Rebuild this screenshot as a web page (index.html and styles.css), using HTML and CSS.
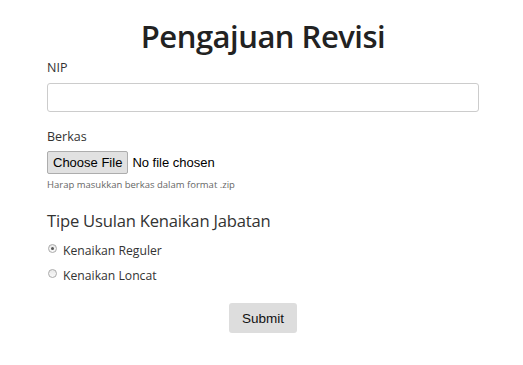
FILE: index.html
```html
<!DOCTYPE html>
<html>
<head>
<meta charset="utf-8">
<link rel="stylesheet" href="styles.css">
</head>
<body>
<div class="container">
  <h1 class="title">Pengajuan Revisi</h1>
  <form class="form">
    <div class="group">
      <label class="label">NIP</label>
      <input class="text-input" type="text">
    </div>
    <div class="group">
      <label class="label">Berkas</label>
      <div class="file-row">
        <button type="button" class="file-btn">Choose File</button>
        <span class="file-text">No file chosen</span>
      </div>
      <div class="help">Harap masukkan berkas dalam format .zip</div>
    </div>
    <h2 class="subtitle">Tipe Usulan Kenaikan Jabatan</h2>
    <div class="radio-list">
      <div class="radio-row"><span class="radio checked"></span><span class="radio-label">Kenaikan Reguler</span></div>
      <div class="radio-row"><span class="radio"></span><span class="radio-label">Kenaikan Loncat</span></div>
    </div>
    <div class="submit-row">
      <button type="button" class="submit">Submit</button>
    </div>
  </form>
</div>
</body>
</html>
```
FILE: styles.css
```css
* { box-sizing: border-box; }
html, body { margin: 0; padding: 0; background: #fff; }
body {
  font-family: "Open Sans", "Noto Sans", sans-serif;
  color: #333;
}
.container {
  width: 432px;
  margin-left: 47px;
  padding-top: 14px;
}
.title {
  margin: 0;
  text-align: center;
  font-size: 31px;
  font-weight: 600;
  line-height: 44px;
  color: #222;
  letter-spacing: -0.5px;
}
.form { display: flex; flex-direction: column; }
.group { display: flex; flex-direction: column; }
.label {
  font-size: 12.5px;
  line-height: 18px;
  margin-top: 1px;
  color: #333;
}
.text-input {
  margin-top: 6px;
  height: 29px;
  width: 100%;
  border: 1px solid #ccc;
  border-radius: 3px;
  background: #fff;
}
.group + .group { margin-top: 15px; }
.file-row {
  display: flex;
  align-items: center;
  margin-top: 5px;
  height: 23px;
}
.file-btn {
  font-family: "Liberation Sans", Arial, sans-serif;
  font-size: 13px;
  color: #000;
  height: 23px;
  padding: 0 5px;
  border: 1px solid #adadad;
  border-radius: 2px;
  background: #e1e1e1;
}
.file-text {
  font-family: "Liberation Sans", Arial, sans-serif;
  font-size: 13px;
  color: #000;
  margin-left: 4px;
}
.help {
  font-size: 9.5px;
  color: #666;
  margin-top: 4px;
  line-height: 14px;
}
.subtitle {
  margin: 16px 0 0 0;
  font-size: 16.6px;
  font-weight: 400;
  line-height: 26px;
  color: #333;
  letter-spacing: -0.2px;
}
.radio-list {
  display: flex;
  flex-direction: column;
  margin-top: 4px;
}
.radio-row {
  display: flex;
  align-items: center;
  height: 25px;
}
.radio {
  width: 9px;
  height: 9px;
  border-radius: 50%;
  border: 1px solid #aaa;
  background: linear-gradient(#e8e8e8, #fafafa);
  margin-right: 6px;
  margin-left: 1px;
  position: relative;
  top: -2px;
}
.radio.checked::after {
  content: "";
  position: absolute;
  left: 2px; top: 2px;
  width: 3px; height: 3px;
  border-radius: 50%;
  background: #555;
}
.radio-label { font-size: 12.2px; color: #333; }
.submit-row {
  display: flex;
  justify-content: center;
  margin-top: 15px;
}
.submit {
  font-family: "Liberation Sans", Arial, sans-serif;
  font-size: 13.5px;
  color: #111;
  background: #dddddd;
  border: none;
  border-radius: 3px;
  width: 68px;
  height: 30px;
}
```
